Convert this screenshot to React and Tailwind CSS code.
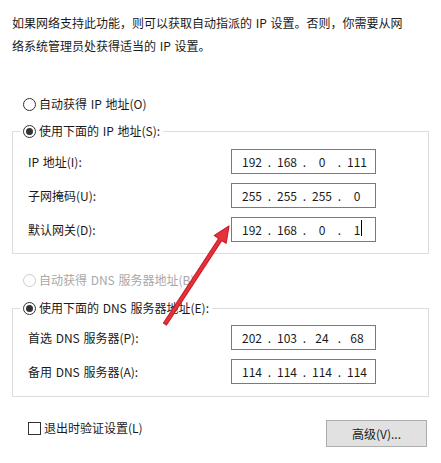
import React from "react"

const ipRows = [
  { label: "IP 地址(I):", parts: ["192", "168", "0", "111"] },
  { label: "子网掩码(U):", parts: ["255", "255", "255", "0"] },
  { label: "默认网关(D):", parts: ["192", "168", "0", "1"], caret: true },
]

const dnsRows = [
  { label: "首选 DNS 服务器(P):", parts: ["202", "103", "24", "68"] },
  { label: "备用 DNS 服务器(A):", parts: ["114", "114", "114", "114"] },
]

function Radio({ checked, disabled, children }) {
  return (
    <div className={`flex h-[18px] items-center ${disabled ? "text-[#a8a8a8]" : "text-[#1a1a1a]"}`}>
      <span
        className={`flex h-[13px] w-[13px] items-center justify-center rounded-full border bg-white ${
          disabled ? "border-[#cccccc]" : "border-[#333333]"
        }`}
      >
        {checked && <span className="h-[7px] w-[7px] rounded-full bg-[#333333]" />}
      </span>
      <span className="ml-[3px] whitespace-nowrap">{children}</span>
    </div>
  )
}

function IpBox({ parts, caret }) {
  return (
    <div className="flex h-[25px] w-[145px] items-center border border-[#7a7a7a] bg-white pl-[6px]">
      {parts.map((p, i) => (
        <React.Fragment key={i}>
          {i > 0 && <span className="w-[7px] text-center">.</span>}
          <span className="w-[28px] text-center">
            <span className="relative">
              {p}
              {caret && i === 3 && (
                <span className="absolute -right-[2px] top-[-1px] h-[16px] w-px bg-black" />
              )}
            </span>
          </span>
        </React.Fragment>
      ))}
    </div>
  )
}

function Group({ legend, rows, pt, pb, className }) {
  return (
    <fieldset className={`border border-[#dcdcdc] ${className}`}>
      <legend className="ml-[7px] bg-white px-[3px]">
        <Radio checked>{legend}</Radio>
      </legend>
      <div className={`grid grid-cols-[203px_145px] items-center gap-y-[9px] pl-[15px] ${pt} ${pb}`}>
        {rows.map((r) => (
          <React.Fragment key={r.label}>
            <span className="whitespace-nowrap">{r.label}</span>
            <IpBox parts={r.parts} caret={r.caret} />
          </React.Fragment>
        ))}
      </div>
    </fieldset>
  )
}

export default function App() {
  return (
    <div className="relative h-[463px] w-[441px] overflow-hidden bg-white px-[12px] font-['Noto_Sans_CJK_SC','Noto_Sans',sans-serif] text-[12px] text-[#1a1a1a] [word-spacing:1px]">
      {/* intro text */}
      <p className="pt-[11px] leading-[23px]">
        如果网络支持此功能，则可以获取自动指派的 IP 设置。否则，你需要从网
        <br />
        络系统管理员处获得适当的 IP 设置。
      </p>

      <div className="mt-[38px] pl-[11px]">
        <Radio>自动获得 IP 地址(O)</Radio>
      </div>

      <Group
        legend="使用下面的 IP 地址(S):"
        rows={ipRows}
        pt="pt-[9px]"
        pb="pb-[11px]"
        className="mt-[9px]"
      />

      <div className="mt-[17px] pl-[11px]">
        <Radio disabled>自动获得 DNS 服务器地址(B)</Radio>
      </div>

      <Group
        legend="使用下面的 DNS 服务器地址(E):"
        rows={dnsRows}
        pt="pt-[8px]"
        pb="pb-[12px]"
        className="mt-[10px]"
      />

      {/* bottom row */}
      <div className="mt-[23px] flex items-start justify-between">
        <div className="flex h-[16px] items-center pl-[16px]">
          <span className="h-[13px] w-[13px] border border-[#333333] bg-white" />
          <span className="ml-[3px]">退出时验证设置(L)</span>
        </div>
        <button className="mr-[2px] flex h-[27px] w-[101px] items-center justify-center border border-[#adadad] bg-[#e1e1e1] text-[#1a1a1a]">
          高级(V)...
        </button>
      </div>

      {/* red annotation arrow */}
      <svg className="pointer-events-none absolute left-0 top-0" width="441" height="463" viewBox="0 0 441 463">
        <polygon
          points="166.5,325 221.8,240.4 226.1,243.2 229,226 214.4,235.6 218.8,238.4 163.5,323"
          fill="#e3343b"
          stroke="#d01c27"
          strokeWidth="1.2"
          strokeLinejoin="round"
        />
      </svg>
    </div>
  )
}
